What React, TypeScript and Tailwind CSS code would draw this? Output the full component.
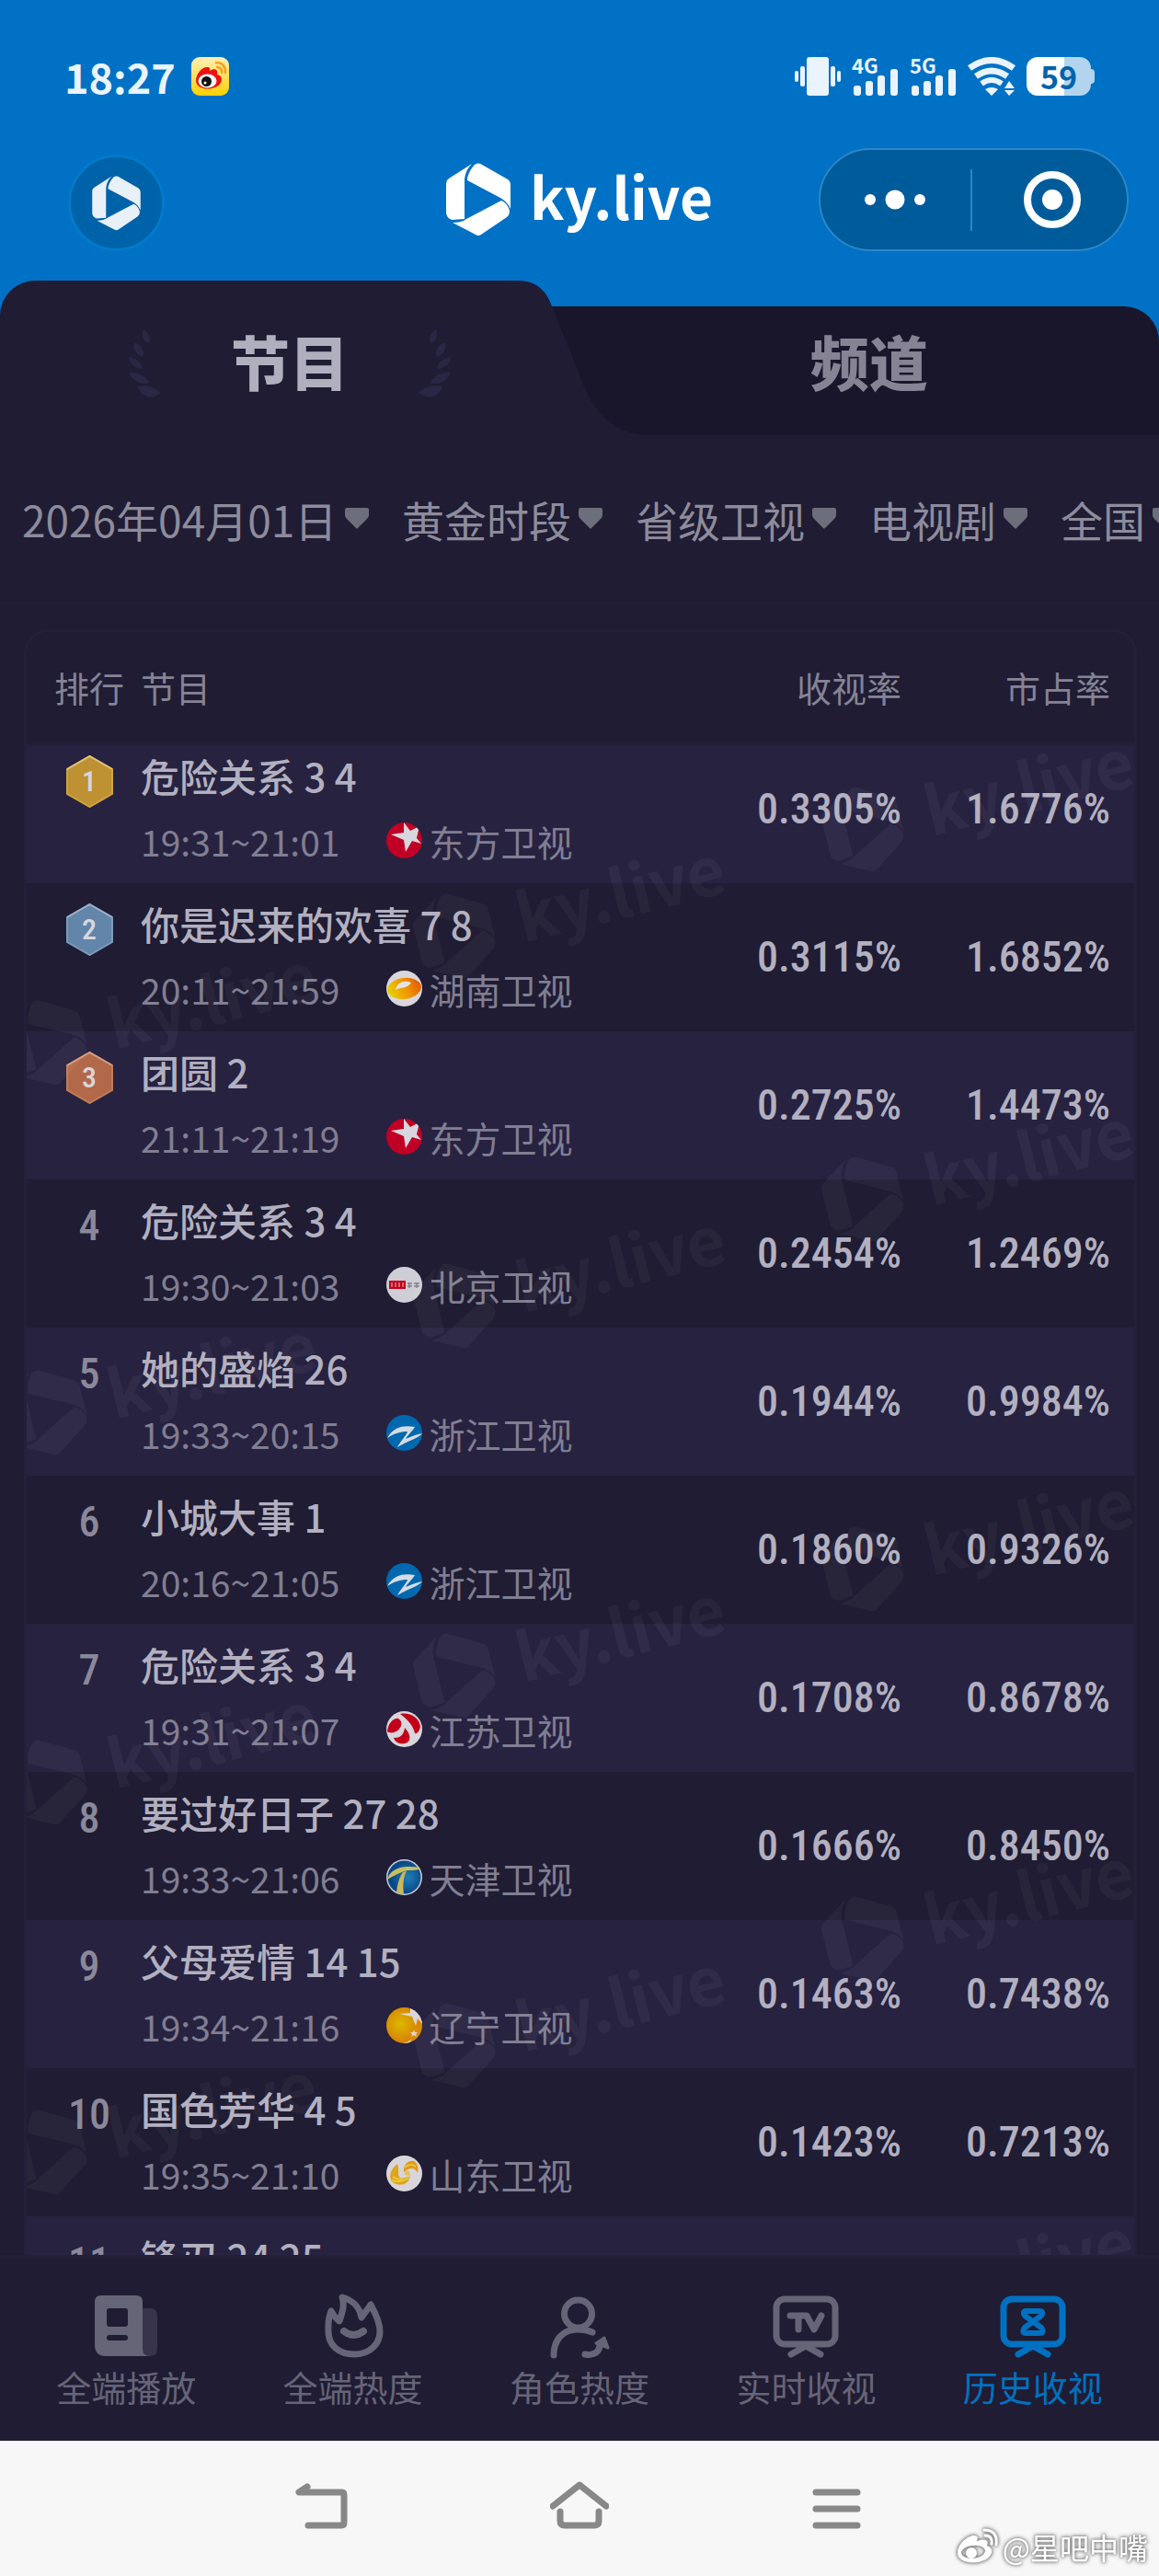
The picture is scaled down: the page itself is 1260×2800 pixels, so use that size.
import React from "react";

const CJK = "font-['Noto_Sans_CJK_SC',sans-serif]";
const DIN = "font-['Liberation_Sans_Narrow','Roboto_Condensed','Noto_Sans_CJK_SC',sans-serif] font-medium";

type Station = "dongfang" | "hunan" | "beijing" | "zhejiang" | "jiangsu" | "tianjin" | "liaoning" | "shandong";

interface Programme {
  rank: number;
  title: string;
  time: string;
  station: Station;
  rating: string;
  share: string;
}

const stationNames: Record<Station, string> = {
  dongfang: "东方卫视",
  hunan: "湖南卫视",
  beijing: "北京卫视",
  zhejiang: "浙江卫视",
  jiangsu: "江苏卫视",
  tianjin: "天津卫视",
  liaoning: "辽宁卫视",
  shandong: "山东卫视",
};

const programmes: Programme[] = [
  { rank: 1, title: "危险关系 3 4", time: "19:31~21:01", station: "dongfang", rating: "0.3305%", share: "1.6776%" },
  { rank: 2, title: "你是迟来的欢喜 7 8", time: "20:11~21:59", station: "hunan", rating: "0.3115%", share: "1.6852%" },
  { rank: 3, title: "团圆 2", time: "21:11~21:19", station: "dongfang", rating: "0.2725%", share: "1.4473%" },
  { rank: 4, title: "危险关系 3 4", time: "19:30~21:03", station: "beijing", rating: "0.2454%", share: "1.2469%" },
  { rank: 5, title: "她的盛焰 26", time: "19:33~20:15", station: "zhejiang", rating: "0.1944%", share: "0.9984%" },
  { rank: 6, title: "小城大事 1", time: "20:16~21:05", station: "zhejiang", rating: "0.1860%", share: "0.9326%" },
  { rank: 7, title: "危险关系 3 4", time: "19:31~21:07", station: "jiangsu", rating: "0.1708%", share: "0.8678%" },
  { rank: 8, title: "要过好日子 27 28", time: "19:33~21:06", station: "tianjin", rating: "0.1666%", share: "0.8450%" },
  { rank: 9, title: "父母爱情 14 15", time: "19:34~21:16", station: "liaoning", rating: "0.1463%", share: "0.7438%" },
  { rank: 10, title: "国色芳华 4 5", time: "19:35~21:10", station: "shandong", rating: "0.1423%", share: "0.7213%" },
  { rank: 11, title: "锋刃 24 25", time: "", station: "beijing", rating: "", share: "" },
];

function BrandMark({ className }: { className: string }) {
  return (
    <svg viewBox="0 0 70 80" className={className} fill="currentColor" aria-hidden="true">
      <path d="M0 22Q0 19 3 17L28 1Q21 8 20 18V61L6 62Q0 59 0 54Z" />
      <path d="M23 17Q25 8 31 2Q35-1 39 2L67 18Q70 20 70 24V50Q66 41 57 37L23 19Z" />
      <path d="M60 41Q67 44 69 52Q69 57 66 59L38 78Q35 80 32 78L7 65Q17 65 22 61Z" />
    </svg>
  );
}

function WeiboBadge() {
  return (
    <svg viewBox="0 0 41 42" className="h-[42px] w-[41px]" role="img" aria-label="微博">
      <defs>
        <linearGradient id="wb" x1="0" y1="0" x2="0" y2="1">
          <stop offset="0" stopColor="#fdf0b8" />
          <stop offset="1" stopColor="#ffd000" />
        </linearGradient>
      </defs>
      <rect width="41" height="42" rx="9" fill="url(#wb)" />
      <path d="M5 26C5 18 12 10 18 11C21 11 20 14 20 15C24 12 30 13 28 19C33 20 34 24 32 28C27 37 6 37 5 26Z" fill="#ee1111" />
      <ellipse cx="17.500" cy="26" rx="10" ry="7.500" fill="#fff" />
      <circle cx="16.500" cy="26.500" r="5.500" fill="#111" />
      <circle cx="15" cy="28" r="1.500" fill="#fff" />
      <path d="M28 11Q33 11 33 17M27 6Q37 6 37 17" fill="none" stroke="#f7a01b" strokeWidth="2.500" strokeLinecap="round" />
    </svg>
  );
}

function Signal({ label }: { label: string }) {
  return (
    <div className="relative h-[42px] w-[51px]">
      <span className="absolute -top-1 left-0 text-[22px] leading-6 font-bold">{label}</span>
      <svg viewBox="0 0 51 42" className="h-full w-full" fill="currentColor" aria-hidden="true">
        <rect x="2" y="31" width="8" height="11" rx="3" />
        <rect x="15" y="26" width="8" height="16" rx="3" />
        <rect x="28" y="20" width="8" height="22" rx="3" />
        <rect x="42" y="13" width="8" height="29" rx="3" />
      </svg>
    </div>
  );
}

function StatusBar() {
  return (
    <div className="flex h-[161px] items-center justify-between pt-1 pr-[70px] pl-[70px] text-[#eaf4ff]">
      <div className="flex items-center gap-[17px]">
        <span className="text-[45px] leading-[48px] font-bold">18:27</span>
        <WeiboBadge />
      </div>
      <div className="flex items-center gap-3">
        <svg viewBox="0 0 50 42" className="h-[42px] w-[50px]" fill="currentColor" aria-label="振动">
          <rect x="13" width="24" height="42" rx="3" />
          <rect y="15" width="4" height="12" rx="2" />
          <rect x="6" y="10" width="5" height="22" rx="2" />
          <rect x="39" y="10" width="5" height="22" rx="2" />
          <rect x="46" y="15" width="4" height="12" rx="2" />
        </svg>
        <Signal label="4G" />
        <Signal label="5G" />
        <svg viewBox="0 0 52 42" className="h-[42px] w-[52px]" aria-label="Wi-Fi">
          <g fill="none" stroke="currentColor" strokeWidth="7">
            <path d="M2 12Q26-5 50 12" />
            <path d="M9 21Q26 9 43 21" />
            <path d="M15 29Q26 21 37 29" strokeWidth="6" />
          </g>
          <path d="M19 35Q26 31 33 35L26 42ZM45 26L51 34H40ZM40 36H51L45 42Z" fill="currentColor" />
        </svg>
        <div className="flex items-center" aria-label="电量 59%">
          <div className="flex h-[42px] w-[70px] items-center justify-center rounded-xl bg-linear-to-r from-white from-58% to-[#b3d4ee] to-58% text-[34px] leading-[42px] font-bold text-[#0063ab]">
            59
          </div>
          <div className="h-4 w-1 rounded-r bg-[#b3d4ee]" />
        </div>
      </div>
    </div>
  );
}

function AppBar() {
  return (
    <div className="grid h-36 grid-cols-[1fr_auto_1fr] items-center pr-[33px] pb-8 pl-[74px]">
      <button
        type="button"
        aria-label="首页"
        className="flex size-[105px] items-center justify-center self-end rounded-full border-[3px] border-[#007bca] bg-[#0062a8] text-[#e8f0f8]"
      >
        <BrandMark className="h-[60px] w-[53px]" />
      </button>
      <div className="-ml-[41px] flex h-28 items-center gap-[21px] text-white">
        <BrandMark className="h-20 w-[70px]" />
        <span className="pb-2.5 text-[62px] leading-[72px] font-bold">ky.live</span>
      </div>
      <div className="flex h-28 w-[337px] items-center justify-self-end rounded-full border-2 border-[#2c86c8] bg-[#005b9b] text-white">
        <button type="button" aria-label="更多" className="flex h-full flex-1 items-center justify-center">
          <svg viewBox="0 0 66 22" className="h-[22px] w-[66px]" fill="currentColor" aria-hidden="true">
            <circle cx="6" cy="11" r="6" />
            <circle cx="33" cy="11" r="10.500" />
            <circle cx="60" cy="11" r="6" />
          </svg>
        </button>
        <span className="h-[67px] w-0.5 bg-[#2c86c8]" />
        <button type="button" aria-label="关闭" className="flex h-full flex-1 items-center justify-center pl-1.5">
          <svg viewBox="0 0 62 62" className="size-[62px]" aria-hidden="true">
            <circle cx="31" cy="31" r="27" fill="none" stroke="currentColor" strokeWidth="8" />
            <circle cx="31" cy="31" r="11" fill="currentColor" />
          </svg>
        </button>
      </div>
    </div>
  );
}

function Laurel({ className }: { className: string }) {
  return (
    <svg viewBox="0 0 35 75" className={className} fill="#2a2745" aria-hidden="true">
      <path d="M16 0C24 6 25 11 21 15C15 12 13 6 16 0Z" />
      <path d="M6 14C15 18 18 24 15 30C7 27 4 21 6 14Z" />
      <path d="M0 30C9 32 15 37 15 43C7 43 1 38 0 30Z" />
      <path d="M0 47C10 46 19 51 22 58C13 61 4 56 0 47Z" />
      <path d="M9 62C18 60 28 62 35 69C25 77 14 74 9 62Z" />
    </svg>
  );
}

function Tabs() {
  return (
    <div role="tablist" className="relative grid h-[168px] grid-cols-2">
      <span className="absolute top-7 right-0 bottom-0 left-[42%] rounded-tr-[38px] bg-[#19162b]" />
      <button type="button" role="tab" aria-selected="true" className="relative">
        <span className="absolute inset-y-0 left-0 right-[89px] rounded-tl-[38px] bg-[#1f1c33]" />
        <svg viewBox="0 0 170 168" className="absolute top-0 -right-20 h-[168px] w-[170px]" fill="#1f1c33" aria-hidden="true">
          <path d="M0 0H22C42 0 54 10 60 28L90 102C100 132 120 168 166 168H0Z" />
        </svg>
        <span className="relative flex items-center justify-center gap-[76px] pt-3 text-[#b0afbe]">
          <Laurel className="h-[75px] w-[35px]" />
          <span className="pb-2 text-[64px] leading-[72px] font-black">节目</span>
          <Laurel className="h-[75px] w-[35px] -scale-x-100" />
        </span>
      </button>
      <button type="button" role="tab" aria-selected="false" className="relative pt-1 text-[64px] leading-[72px] font-black text-[#858394]">
        频道
      </button>
    </div>
  );
}

function Filters() {
  const filters = [
    { label: "日期", value: "2026年04月01日" },
    { label: "时段", value: "黄金时段" },
    { label: "频道组", value: "省级卫视" },
    { label: "类型", value: "电视剧" },
    { label: "地区", value: "全国" },
  ];
  return (
    <form className="flex h-[184px] shrink-0 items-center gap-9 overflow-hidden border-b-[3px] border-[#22203a] pl-6">
      {filters.map((f) => (
        <label key={f.label} className="flex shrink-0 items-center gap-2">
          <select
            aria-label={f.label}
            className="appearance-none bg-transparent text-[46px] leading-[60px] text-[#8d8b9c] outline-none"
          >
            <option>{f.value}</option>
          </select>
          <svg viewBox="0 0 26 23" className="h-[23px] w-[26px]" fill="#6d6e7b" aria-hidden="true">
            <path d="M2 0H24Q26 0 26 2V8Q26 10 24 12L14 22Q13 23 12 22L2 12Q0 10 0 8V2Q0 0 2 0Z" />
          </svg>
        </label>
      ))}
    </form>
  );
}

function StationLogo({ station }: { station: Station }) {
  const id = "clip-" + station;
  return (
    <svg viewBox="0 0 39 39" className="size-[39px]" aria-hidden="true">
      <defs>
        <clipPath id={id}>
          <circle cx="19.500" cy="19.500" r="19.500" />
        </clipPath>
        <linearGradient id="hn" x1="0" x2="1" y1="0.600" y2="0.400">
          <stop offset="0" stopColor="#e6d400" />
          <stop offset="0.600" stopColor="#f09000" />
          <stop offset="1" stopColor="#e05a00" />
        </linearGradient>
        <radialGradient id="ln" cx="0.400" cy="0.450">
          <stop offset="0" stopColor="#dcb800" />
          <stop offset="1" stopColor="#d98500" />
        </radialGradient>
        <radialGradient id="tj" cx="0.600" cy="0.500">
          <stop offset="0" stopColor="#1e7fb8" />
          <stop offset="1" stopColor="#0a4684" />
        </radialGradient>
      </defs>
      <g clipPath={`url(#${id})`}>
        {station === "dongfang" && (
          <>
            <rect width="39" height="39" fill="#c00024" />
            <path d="M19 0L26 9L36 4L33 17L38 23L28 20L21 32L19 19L5 13L19 11Z" fill="#d8d6de" />
          </>
        )}
        {station === "hunan" && (
          <>
            <rect width="39" height="39" fill="#d9d7dd" />
            <ellipse cx="19.500" cy="19.500" rx="18.500" ry="11.500" fill="url(#hn)" transform="rotate(-8 19.500 19.500)" />
            <path d="M10 21C12 12 20 10 27 13C24 19 16 18 10 21Z" fill="#e4e2e6" />
          </>
        )}
        {station === "beijing" && (
          <>
            <rect width="39" height="39" fill="#cfced6" />
            <rect x="3" y="15" width="18" height="9" fill="#c4001c" />
            <path d="M6 17V22M10 17V22M14 17V22M18 17V22" stroke="#e0838d" strokeWidth="1.500" />
            <path d="M23 18H28M23 21H28M25 17V23M30 18H36M30 21H36M33 17V23" stroke="#85848e" strokeWidth="1.500" />
          </>
        )}
        {station === "zhejiang" && (
          <>
            <rect width="39" height="39" fill="#0068ae" />
            <path d="M1 25C8 12 20 11 31 13C29 17 23 22 21 26C28 23 33 21 39 20C37 24 24 28 12 35C15 29 22 22 23 18C15 18 9 20 1 25Z" fill="#d5dbe4" />
          </>
        )}
        {station === "jiangsu" && (
          <>
            <rect width="39" height="39" fill="#d8d6dc" />
            <path d="M1 22C2 12 9 7 13 8C17 10 17 15 15 18C12 23 5 25 1 22Z" fill="#c20019" />
            <path d="M15 3C26 1 36 7 37 17C36 22 33 25 31 24C29 15 23 9 15 3Z" fill="#c20019" />
            <path d="M8 29C15 29 19 26 20 18C25 23 27 29 24 33C20 37 10 36 8 29Z" fill="#c20019" />
          </>
        )}
        {station === "tianjin" && (
          <>
            <rect width="39" height="39" fill="#c9d0dc" />
            <circle cx="19.500" cy="19.500" r="18" fill="url(#tj)" />
            <path d="M3 17C10 7 25 7 37 9C36 12 30 12 23 12C15 14 8 18 1 22Z" fill="#c8bf63" />
            <path d="M18 14L22 13C18 20 18 29 19 38L11 36C12 27 14 20 18 14Z" fill="#cbb75c" />
          </>
        )}
        {station === "liaoning" && (
          <>
            <rect width="39" height="39" fill="url(#ln)" />
            <path d="M26 0L39 2V18L34 12L32 20L28 10L14 7L26 6ZM30 24L31 27L34 27L32 29L33 32L30 30L27 32L28 29L26 27L29 27ZM18 39Q24 38 28 34L25 39Z" fill="#d9d6da" />
          </>
        )}
        {station === "shandong" && (
          <>
            <rect width="39" height="39" fill="#d8d6dc" />
            <path d="M12 9C15 15 11 20 15 24C20 26 23 22 26 23C24 31 16 34 8 30C1 25 4 15 12 9Z" fill="#dfa51d" />
            <path d="M34 19C31 12 25 13 19 18C18 10 24 5 30 6C35 9 35 15 34 19Z" fill="#df9a1c" />
            <path d="M6 27Q14 30 25 24M7 23Q12 27 18 25M20 13Q26 7 32 12" fill="none" stroke="#e9c63c" strokeWidth="2" />
            <path d="M20 17Q26 14 26 22L20 21Z" fill="#e3c15c" />
          </>
        )}
      </g>
    </svg>
  );
}

function RankBadge({ rank }: { rank: number }) {
  const medals: Record<number, { fill: string; edge: string; light: string }> = {
    1: { fill: "#be9232", edge: "#cda63f", light: "#dcc377" },
    2: { fill: "#6385aa", edge: "#7d9abb", light: "#9ab0c8" },
    3: { fill: "#b2694a", edge: "#c27c59", light: "#d19c80" },
  };
  const medal = medals[rank];
  if (!medal) {
    return <span className={`${DIN} text-[46px] leading-[57px] text-[#8a8899]`}>{rank}</span>;
  }
  return (
    <span className="relative flex h-[57px] w-[51px] items-center justify-center">
      <svg viewBox="0 0 51 57" className="absolute inset-0" aria-hidden="true">
        <path d="M25.500 1L50 15V42L25.500 56L1 42V15Z" fill={medal.fill} stroke={medal.edge} strokeWidth="2" />
        <path d="M1 15L25.500 1L50 15" fill="none" stroke={medal.light} strokeWidth="2" />
      </svg>
      <span className={`${DIN} relative text-[32px] leading-[57px] text-[#d9d6dc]`}>{rank}</span>
    </span>
  );
}

function Watermarks() {
  const columns = ["pt-[13px]", "pt-[129px]", "pt-[245px]"];
  return (
    <div aria-hidden="true" className="pointer-events-none absolute inset-x-0 top-[122px] bottom-0 overflow-hidden text-white opacity-[0.04]">
      <div className="-ml-6 flex flex-row-reverse justify-end gap-[98px]">
        {columns.map((pad) => (
          <div key={pad} className={`flex w-[346px] shrink-0 flex-col gap-[306px] ${pad}`}>
            {[0, 1, 2, 3, 4].map((n) => (
              <div key={n} className="flex h-24 -rotate-14 items-center gap-7">
                <BrandMark className="h-24 w-[84px]" />
                <span className="pb-3 text-[72px] leading-[84px] font-bold">ky.live</span>
              </div>
            ))}
          </div>
        ))}
      </div>
    </div>
  );
}

function RatingsTable() {
  return (
    <main className="relative mt-[27px] mr-6 ml-[26px] min-h-0 flex-1 overflow-hidden rounded-t-[26px] border-x-[3px] border-t-[3px] border-[#22203a]">
      <table className="w-full border-collapse text-left">
        <thead>
          <tr className="h-[122px] border-b-[3px] border-[#22203a] text-[38px] leading-[48px] text-[#858395]">
            <th scope="col" className="w-[124px] pl-[30px] font-normal whitespace-nowrap">排行</th>
            <th scope="col" className="font-normal">节目</th>
            <th scope="col" className="w-[250px] text-right font-normal">收视率</th>
            <th scope="col" className="w-[253px] pr-[26px] text-right font-normal">市占率</th>
          </tr>
        </thead>
        <tbody>
          {programmes.map((p) => (
            <tr key={p.rank} className="group odd:bg-[#272240]">
              <td>
                <div className="flex h-[161px] justify-center pt-[22px] pl-3 group-first:-mt-3">
                  <RankBadge rank={p.rank} />
                </div>
              </td>
              <td>
                <div className="flex h-[161px] flex-col gap-[19px] pt-4 group-first:-mt-3">
                  <span className="text-[42px] leading-[56px] font-medium whitespace-nowrap text-[#b2b0c0]">{p.title}</span>
                  <span className="flex items-center gap-[50px] text-[39px] leading-[48px] whitespace-nowrap text-[#807e92]">
                    <span>{p.time}</span>
                    <span className="flex items-center gap-2">
                      <StationLogo station={p.station} />
                      {stationNames[p.station]}
                    </span>
                  </span>
                </div>
              </td>
              <td>
                <div className={`${DIN} flex h-[161px] items-center justify-end text-[46px] text-[#b2b0c0] group-first:-mt-3`}>{p.rating}</div>
              </td>
              <td>
                <div className={`${DIN} flex h-[161px] items-center justify-end pr-[26px] text-[46px] text-[#b2b0c0] group-first:-mt-3`}>{p.share}</div>
              </td>
            </tr>
          ))}
        </tbody>
      </table>
      <Watermarks />
    </main>
  );
}

const stroke = { fill: "none", stroke: "currentColor", strokeWidth: 7, strokeLinecap: "round", strokeLinejoin: "round" } as const;

const navItems: { label: string; icon: React.ReactNode }[] = [
  {
    label: "全端播放",
    icon: (
      <>
        <path d="M46 17H62Q70 17 70 25V61Q70 69 62 69H46Z" fill="#37344b" />
        <path fillRule="evenodd" fill="currentColor" d="M9 3H47Q54 3 54 10V61Q54 69 62 69H14Q2 69 2 57V10Q2 3 9 3ZM18 17Q15 17 15 20V34Q15 37 18 37H35Q38 37 38 34V20Q38 17 35 17ZM18 46Q15 46 15 49Q15 52 18 52H35Q38 52 38 49Q38 46 35 46Z" />
      </>
    ),
  },
  {
    label: "全端热度",
    icon: (
      <g {...stroke}>
        <path d="M12 20C8 30 9 36 9 42C9 57 20 67 37 67C54 67 65 56 65 42C65 32 60 22 55 13C52 18 48 22 45 27C43 17 38 9 24 5C27 14 24 22 21 31C17 28 14 24 12 20Z" />
        <path d="M26 42Q36 50 47 42" strokeWidth="8" />
      </g>
    ),
  },
  {
    label: "角色热度",
    icon: (
      <g {...stroke}>
        <circle cx="34.500" cy="23" r="15" />
        <path d="M8 68C8 50 19 40 34 40Q43 40 50 43M42 67C52 69 58 64 58 57" />
        <path d="M63 49L67 60L54 55Z" fill="currentColor" strokeWidth="3" />
      </g>
    ),
  },
  {
    label: "实时收视",
    icon: (
      <g {...stroke}>
        <rect x="4" y="7" width="64" height="49" rx="9" />
        <path d="M20 67L36 58L52 67" />
        <path d="M19 25H37L45 40L53 25M28 26V40" />
      </g>
    ),
  },
  {
    label: "历史收视",
    icon: (
      <g {...stroke}>
        <rect x="4" y="7" width="64" height="49" rx="9" />
        <path d="M20 67L36 58L52 67" />
        <path d="M29 20H43Q48 20 45 25L27 38Q23 44 29 44H43Q49 44 45 38L27 25Q24 20 29 20Z" strokeWidth="6" />
      </g>
    ),
  },
];

function BottomNav() {
  return (
    <nav className="grid h-[202px] shrink-0 grid-cols-5 border-t-[3px] border-[#22203a] px-3.5 pt-[38px]">
      {navItems.map((item, i) => {
        const active = i === navItems.length - 1;
        return (
          <a
            key={item.label}
            href="#"
            aria-current={active ? "page" : undefined}
            className={`flex flex-col items-center gap-1.5 ${active ? "text-[#0071c0]" : "text-[#666477]"}`}
          >
            <svg viewBox="0 0 72 72" className="size-[72px]" aria-hidden="true">
              {item.icon}
            </svg>
            <span className="text-[38px] leading-[48px]">{item.label}</span>
          </a>
        );
      })}
    </nav>
  );
}

function SystemNav() {
  const line = { fill: "none", stroke: "#888888", strokeWidth: 7, strokeLinecap: "round", strokeLinejoin: "round" } as const;
  return (
    <footer className="relative flex h-[147px] shrink-0 items-center justify-center gap-[216px] bg-[#f7f7f7] pb-1">
      <button type="button" aria-label="返回">
        <svg viewBox="0 0 64 56" className="h-14 w-16" aria-hidden="true">
          <path d="M16 6L7 12H54Q56 12 56 15V45Q56 48 53 48H17" {...line} />
        </svg>
      </button>
      <button type="button" aria-label="主屏幕">
        <svg viewBox="0 0 64 56" className="h-14 w-16" aria-hidden="true">
          <path d="M3 27L32 4L61 27M11 33V43Q11 48 16 48H48Q53 48 53 43V33" {...line} />
        </svg>
      </button>
      <button type="button" aria-label="最近任务">
        <svg viewBox="0 0 64 56" className="h-14 w-16" aria-hidden="true">
          <path d="M9 12H54M9 30H54M9 48H54" {...line} />
        </svg>
      </button>
      <div className="absolute right-3 bottom-2.5 flex items-center gap-1 text-[32px] leading-[44px] text-white [filter:drop-shadow(0_0_2px_#777)_drop-shadow(0_0_1px_#999)]">
        <svg viewBox="0 0 46 40" className="h-10 w-[46px]" aria-hidden="true">
          <path fillRule="evenodd" fill="currentColor" d="M1 27C1 18 11 8 19 8C24 8 23 12 22 14C29 11 36 12 33 19C38 21 40 24 37 29C30 41 1 40 1 27ZM5 27C6 35 29 35 31 25C31 16 6 17 5 27Z" />
          <circle cx="16" cy="27" r="6" fill="currentColor" />
          <path d="M31 8Q39 8 38 17M30 2Q45 2 43 18" fill="none" stroke="currentColor" strokeWidth="3" strokeLinecap="round" />
        </svg>
        <span>@星吧中嘴</span>
      </div>
    </footer>
  );
}

export default function App() {
  return (
    <div className={`${CJK} flex h-screen flex-col overflow-hidden bg-[#1f1c33]`}>
      <header className="shrink-0 bg-[#0071c5]">
        <StatusBar />
        <AppBar />
        <Tabs />
      </header>
      <Filters />
      <RatingsTable />
      <BottomNav />
      <SystemNav />
    </div>
  );
}
